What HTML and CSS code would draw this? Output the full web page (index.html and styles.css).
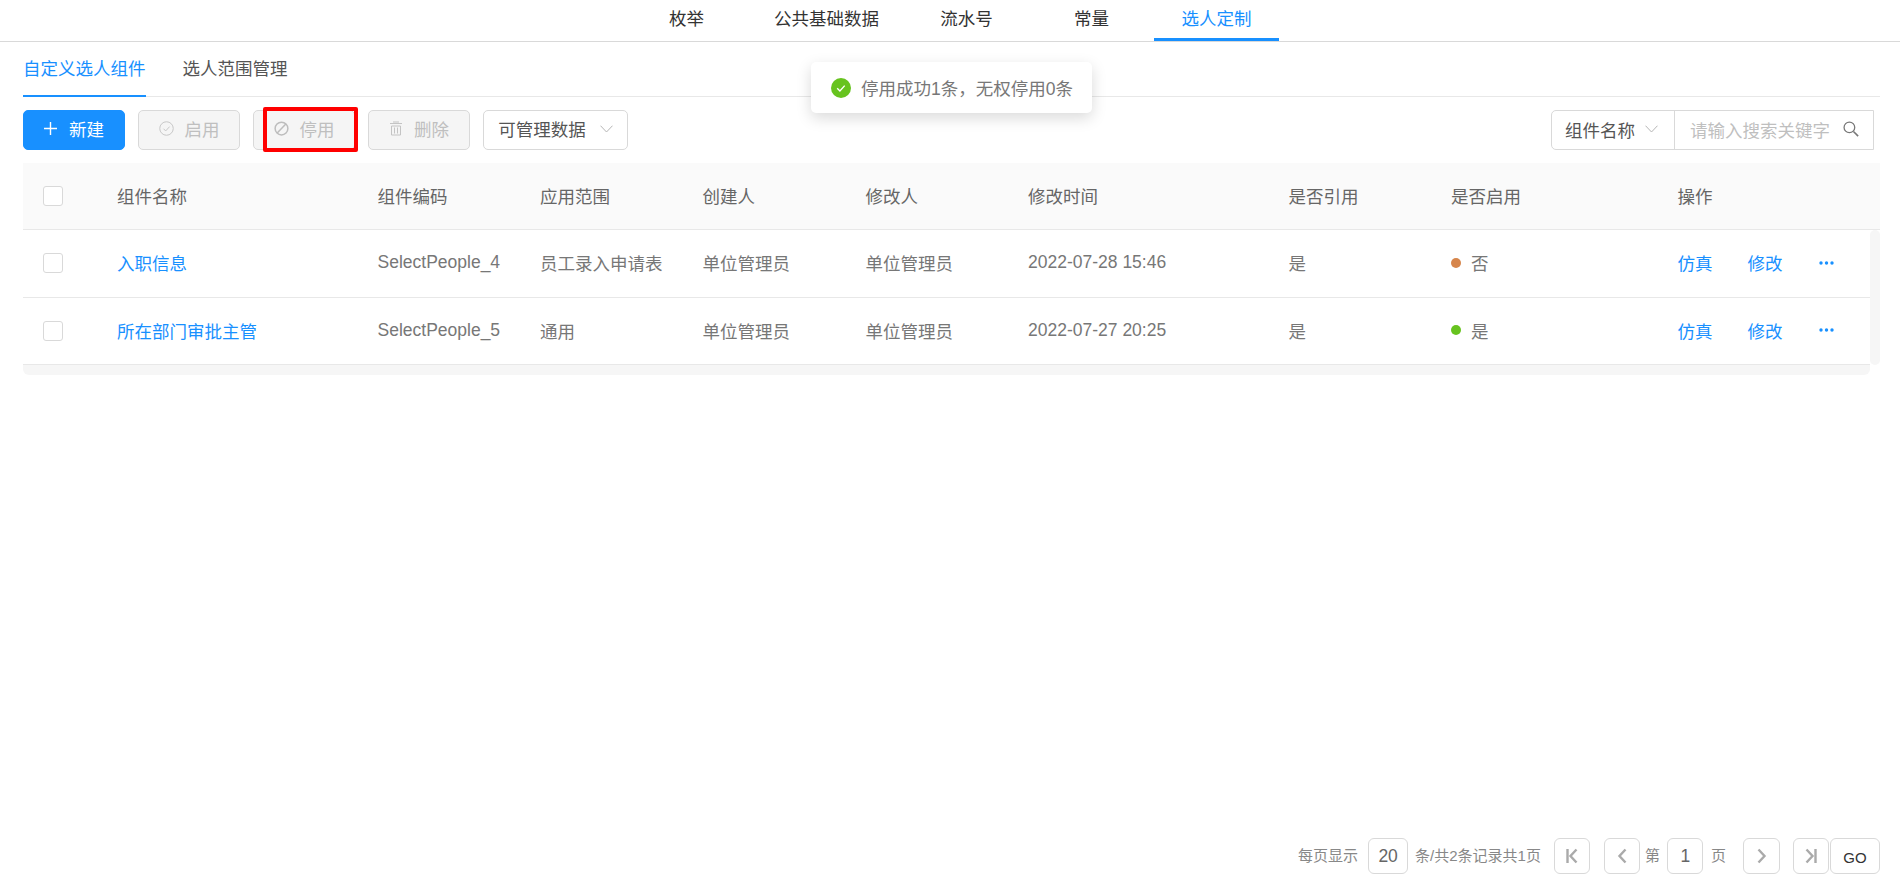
FILE: index.html
```html
<!DOCTYPE html>
<html lang="zh-CN">
<head>
    <meta charset="UTF-8">
    <title>选人定制</title>
    <link rel="stylesheet" href="styles.css">
</head>
<body>
    <nav class="top-nav">
        <a class="top-tab">枚举</a>
        <a class="top-tab">公共基础数据</a>
        <a class="top-tab">流水号</a>
        <a class="top-tab">常量</a>
        <a class="top-tab active">选人定制</a>
    </nav>

    <div class="content">
        <div class="sub-tabs">
            <a class="sub-tab active">自定义选人组件</a>
            <a class="sub-tab">选人范围管理</a>
        </div>

        <div class="toolbar">
            <button class="btn btn-primary">
                <svg class="icon" width="13" height="13" viewBox="0 0 13 13"><path d="M6.5 0v13M0 6.5h13" stroke="#fff" stroke-width="1.4" fill="none"/></svg>
                <span>新建</span>
            </button>
            <button class="btn btn-disabled">
                <svg class="icon" width="15" height="15" viewBox="0 0 16 16"><circle cx="8" cy="8" r="7.2" stroke="#c4c4c4" fill="none"/><path d="M4.8 8.2l2.3 2.4 4.2-4.6" stroke="#c4c4c4" fill="none"/></svg>
                <span>启用</span>
            </button>
            <div class="btn-mark-wrap">
                <button class="btn btn-disabled">
                    <svg class="icon" width="15" height="15" viewBox="0 0 16 16"><circle cx="8" cy="8" r="6.8" stroke="#bdbdbd" stroke-width="1.6" fill="none"/><path d="M3.4 12.8l9.2-9.6" stroke="#bdbdbd" stroke-width="1.6"/></svg>
                    <span>停用</span>
                </button>
                <div class="red-mark"></div>
            </div>
            <button class="btn btn-disabled">
                <svg class="icon" width="14" height="15" viewBox="0 0 14 15"><path d="M1 2.5h12M4 1h6" stroke="#c4c4c4" stroke-width="1.2"/><path d="M2.5 5h9v9h-9z" stroke="#c4c4c4" fill="none"/><path d="M5.5 6.5v6M8.5 6.5v6" stroke="#c4c4c4"/></svg>
                <span>删除</span>
            </button>
            <button class="btn btn-select">
                <span>可管理数据</span>
                <svg class="chevron" width="13" height="8" viewBox="0 0 13 8"><path d="M.5.7l6 6.3 6-6.3" stroke="#b5b5b5" fill="none"/></svg>
            </button>

            <div class="search">
                <div class="search-type">
                    <span>组件名称</span>
                    <svg class="chevron" width="13" height="8" viewBox="0 0 13 8"><path d="M.5.7l6 6.3 6-6.3" stroke="#b5b5b5" fill="none"/></svg>
                </div>
                <div class="search-input">
                    <span class="placeholder">请输入搜索关键字</span>
                    <svg width="16" height="16" viewBox="0 0 15 15"><circle cx="6" cy="6" r="5" stroke="#777" stroke-width="1.2" fill="none"/><path d="M9.8 9.8l4.4 4.4" stroke="#777" stroke-width="1.5"/></svg>
                </div>
            </div>
        </div>

        <div class="table">
            <div class="row head">
                <div class="cell check-cell"><span class="checkbox"></span></div>
                <div class="cell">组件名称</div>
                <div class="cell">组件编码</div>
                <div class="cell">应用范围</div>
                <div class="cell">创建人</div>
                <div class="cell">修改人</div>
                <div class="cell">修改时间</div>
                <div class="cell">是否引用</div>
                <div class="cell">是否启用</div>
                <div class="cell">操作</div>
            </div>
            <div class="table-body">
                <div class="rows">
                    <div class="row">
                        <div class="cell check-cell"><span class="checkbox"></span></div>
                        <div class="cell link">入职信息</div>
                        <div class="cell">SelectPeople_4</div>
                        <div class="cell">员工录入申请表</div>
                        <div class="cell">单位管理员</div>
                        <div class="cell">单位管理员</div>
                        <div class="cell">2022-07-28 15:46</div>
                        <div class="cell">是</div>
                        <div class="cell"><span class="dot dot-off"></span>否</div>
                        <div class="cell actions">
                            <a class="link">仿真</a>
                            <a class="link">修改</a>
                            <svg width="15" height="4" viewBox="0 0 15 4"><circle cx="2" cy="2" r="1.7"/><circle cx="7.5" cy="2" r="1.7"/><circle cx="13" cy="2" r="1.7"/></svg>
                        </div>
                    </div>
                    <div class="row">
                        <div class="cell check-cell"><span class="checkbox"></span></div>
                        <div class="cell link">所在部门审批主管</div>
                        <div class="cell">SelectPeople_5</div>
                        <div class="cell">通用</div>
                        <div class="cell">单位管理员</div>
                        <div class="cell">单位管理员</div>
                        <div class="cell">2022-07-27 20:25</div>
                        <div class="cell">是</div>
                        <div class="cell"><span class="dot dot-on"></span>是</div>
                        <div class="cell actions">
                            <a class="link">仿真</a>
                            <a class="link">修改</a>
                            <svg width="15" height="4" viewBox="0 0 15 4"><circle cx="2" cy="2" r="1.7"/><circle cx="7.5" cy="2" r="1.7"/><circle cx="13" cy="2" r="1.7"/></svg>
                        </div>
                    </div>
                    <div class="scroll-x"></div>
                </div>
                <div class="scroll-y"></div>
            </div>
        </div>
    </div>

    <div class="pager">
        <span class="pager-text">每页显示</span>
        <span class="pager-box size-box">20</span>
        <span class="pager-text">条/共2条记录共1页</span>
        <button class="pager-btn first">
            <svg width="12" height="16" viewBox="0 0 12 16"><path d="M1.5 1v14" stroke="#aaa" stroke-width="2.4"/><path d="M10.5 1.5L4.5 8l6 6.5" stroke="#aaa" stroke-width="2.4" fill="none"/></svg>
        </button>
        <button class="pager-btn prev">
            <svg width="10" height="16" viewBox="0 0 10 16"><path d="M8.5 1.5L2.5 8l6 6.5" stroke="#aaa" stroke-width="2.4" fill="none"/></svg>
        </button>
        <span class="pager-text page-word">第</span>
        <span class="pager-box page-box">1</span>
        <span class="pager-text page-word">页</span>
        <button class="pager-btn next">
            <svg width="10" height="16" viewBox="0 0 10 16"><path d="M1.5 1.5L7.5 8l-6 6.5" stroke="#aaa" stroke-width="2.4" fill="none"/></svg>
        </button>
        <button class="pager-btn last">
            <svg width="12" height="16" viewBox="0 0 12 16"><path d="M10.5 1v14" stroke="#aaa" stroke-width="2.4"/><path d="M1.5 1.5L7.5 8l-6 6.5" stroke="#aaa" stroke-width="2.4" fill="none"/></svg>
        </button>
        <button class="go-btn">GO</button>
    </div>

    <div class="toast">
        <svg width="20" height="20" viewBox="0 0 20 20"><circle cx="10" cy="10" r="10" fill="#67c31f"/><path d="M6.2 10.3l2.7 2.6 4.8-5.3" stroke="#fff" stroke-width="1.4" fill="none"/></svg>
        <span>停用成功1条，无权停用0条</span>
    </div>
</body>
</html>
```

FILE: styles.css
```css
:root {
    --primary-color: #1890ff;
    --text-color: #333;
    --grey-text: #777;
    --border-color: #e8e8e8;
    --control-border: #d9d9d9;
}

* {
    margin: 0;
    padding: 0;
    box-sizing: border-box;
}

html, body {
    height: 891px;
    overflow: hidden;
}

body {
    font-family: "Liberation Sans", "Noto Sans CJK SC", sans-serif;
    font-size: 17.5px;
    color: var(--text-color);
    background: #fff;
    display: flex;
    flex-direction: column;
}

.top-nav {
    display: flex;
    justify-content: center;
    height: 42px;
    padding-left: 3px;
    border-bottom: 1px solid var(--control-border);
}

.top-tab {
    min-width: 125px;
    height: 41px;
    padding: 0 25px 3px;
    display: flex;
    align-items: center;
    justify-content: center;
    border-bottom: 3px solid transparent;
}

.top-tab.active {
    color: var(--primary-color);
    border-bottom-color: var(--primary-color);
}

.content {
    padding: 0 20px 0 23px;
    flex: 1;
}

.sub-tabs {
    display: flex;
    gap: 37px;
    height: 55px;
    border-bottom: 1px solid var(--border-color);
}

.sub-tab {
    height: 55px;
    padding-bottom: 3px;
    display: flex;
    align-items: center;
    border-bottom: 2px solid transparent;
    color: #555;
}

.sub-tab.active {
    color: var(--primary-color);
    border-bottom-color: var(--primary-color);
}

.toolbar {
    display: flex;
    align-items: center;
    gap: 13px;
    margin-top: 13px;
    height: 40px;
}

.btn {
    height: 40px;
    width: 102px;
    padding-bottom: 3px;
    display: flex;
    align-items: center;
    justify-content: center;
    gap: 11px;
    border: 1px solid var(--control-border);
    border-radius: 5px;
    background: #fff;
    font: inherit;
}

.btn-primary {
    background: var(--primary-color);
    border-color: var(--primary-color);
    color: #fff;
    gap: 12px;
}

.btn-disabled {
    background: #f5f5f5;
    color: #bfbfbf;
}

.btn-select {
    width: 145px;
    color: #555;
    gap: 14px;
}

.btn-mark-wrap {
    position: relative;
}

.red-mark {
    position: absolute;
    left: 10px;
    top: -3px;
    width: 95px;
    height: 45px;
    border: 4px solid #f00;
    border-radius: 2px;
}

.search {
    margin-left: auto;
    margin-right: 6px;
    display: flex;
    height: 40px;
    width: 323px;
    border: 1px solid var(--control-border);
    border-radius: 5px 0 0 5px;
}

.search-type {
    width: 123px;
    padding: 0 0 2px 13px;
    display: flex;
    align-items: center;
    gap: 10px;
    color: #555;
    border-right: 1px solid var(--control-border);
}

.search-input {
    flex: 1;
    padding: 0 14px 2px 15px;
    display: flex;
    align-items: center;
    justify-content: space-between;
}

.placeholder {
    color: #bfbfbf;
}

.table {
    margin-top: 13px;
}

.row {
    display: grid;
    grid-template-columns: 94px 260.5px 162.5px 162.5px 163px 162.5px 260.5px 162.5px 226.5px 1fr;
    height: 67.5px;
    border-bottom: 1px solid var(--border-color);
    color: var(--grey-text);
}

.row.head {
    height: 67px;
    background: #fafafa;
    color: #666;
}

.cell {
    display: flex;
    align-items: center;
    white-space: nowrap;
    padding-bottom: 1px;
}

.head .cell {
    padding-bottom: 2px;
}

.cell.check-cell {
    padding: 0 0 0 20px;
}

.checkbox {
    width: 20px;
    height: 20px;
    background: #fff;
    border: 1px solid var(--control-border);
    border-radius: 3px;
}

.link {
    color: var(--primary-color);
}

.dot {
    width: 10px;
    height: 10px;
    border-radius: 50%;
    margin-right: 10px;
}

.dot-off {
    background: #d6854b;
}

.dot-on {
    background: #67c31f;
}

.actions {
    gap: 35px;
}

.actions svg {
    fill: var(--primary-color);
    margin-left: 1px;
}

.table-body {
    display: flex;
}

.rows {
    width: 1848px;
}

.scroll-x {
    height: 10px;
    background: #f6f6f6;
    border-radius: 0 0 6px 6px;
}

.scroll-y {
    width: 10px;
    height: 135px;
    background: #f6f6f6;
    border-radius: 5px;
}

.pager {
    display: flex;
    align-items: center;
    height: 36px;
    margin: 0 20px 17px 0;
    justify-content: flex-end;
    font-size: 15px;
    color: #888;
}

.pager-text {
    margin-top: -4px;
}

.pager-box {
    width: 36px;
    height: 36px;
    padding-top: 1px;
    display: flex;
    align-items: center;
    justify-content: center;
    border: 1px solid var(--control-border);
    border-radius: 6px;
    font-size: 17.5px;
    color: #666;
}

.size-box {
    width: 40px;
    margin: 0 7px 0 10px;
}

.page-box {
    margin: 0 7.5px;
}

.page-word {
    color: #888;
}

.pager-btn {
    width: 36px;
    height: 36px;
    display: flex;
    align-items: center;
    justify-content: center;
    background: #fff;
    border: 1px solid var(--control-border);
    border-radius: 6px;
}

.first {
    margin-left: 13px;
}

.prev {
    margin: 0 5px 0 14px;
}

.next {
    width: 37px;
    margin-left: 17px;
}

.last {
    margin-left: 13px;
}

.go-btn {
    width: 50px;
    height: 36px;
    margin-left: 1px;
    background: #fff;
    border: 1px solid var(--control-border);
    border-radius: 6px;
    font: inherit;
    color: #333;
    padding-top: 3px;
}

.toast {
    position: absolute;
    left: 811px;
    top: 62px;
    width: 281px;
    height: 51px;
    padding-left: 20px;
    display: flex;
    align-items: center;
    gap: 10px;
    background: #fff;
    border-radius: 5px;
    box-shadow: 0 5px 15px rgba(0,0,0,0.15);
    color: var(--grey-text);
}
```
